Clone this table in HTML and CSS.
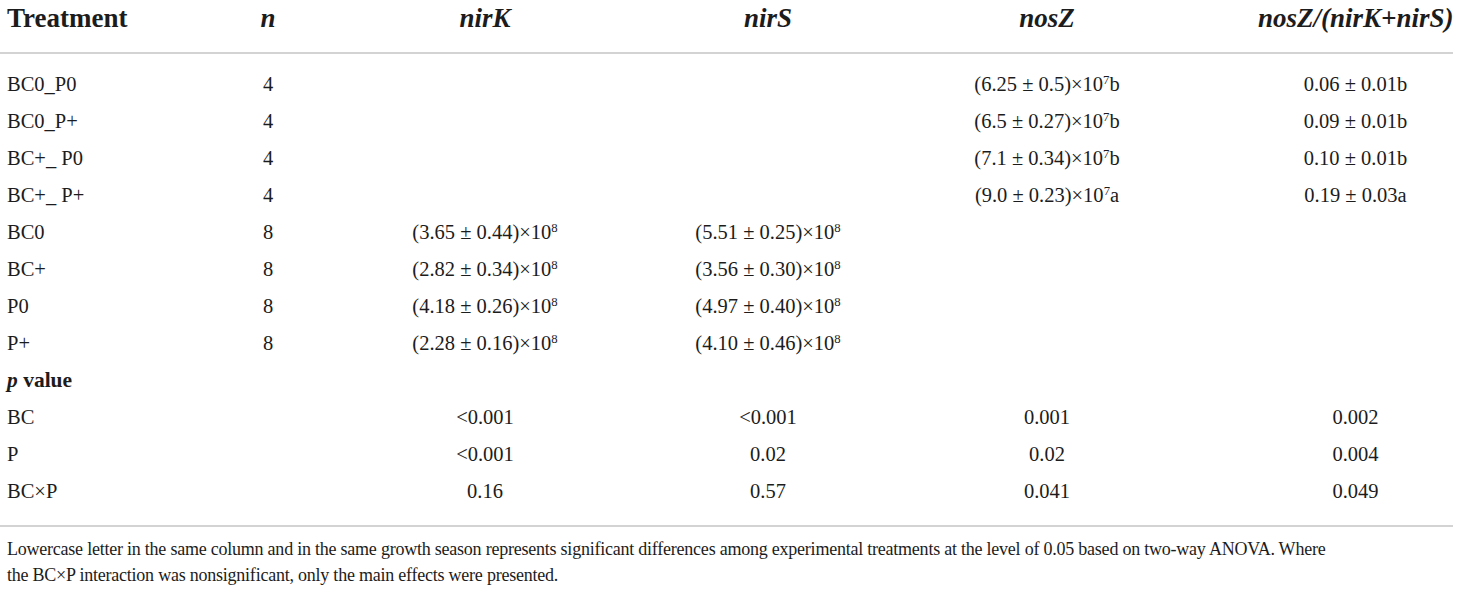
FILE: index.html
```html
<!DOCTYPE html>
<html>
<head>
<meta charset="utf-8">
<link rel="stylesheet" href="styles.css">
</head>
<body>
<div class="wrap">
<table class="tbl">
  <colgroup>
    <col class="c1"><col class="c2"><col class="c3"><col class="c4"><col class="c5"><col class="c6">
  </colgroup>
  <thead>
    <tr>
      <th class="first">Treatment</th>
      <th><i>n</i></th>
      <th><i>nirK</i></th>
      <th><i>nirS</i></th>
      <th><i>nosZ</i></th>
      <th class="last"><i>nosZ/(nirK+nirS)</i></th>
    </tr>
  </thead>
  <tbody>
    <tr class="toprow"><td class="first">BC0_P0</td><td>4</td><td></td><td></td><td>(6.25 ± 0.5)×10<sup>7</sup>b</td><td class="last">0.06 ± 0.01b</td></tr>
    <tr><td class="first">BC0_P+</td><td>4</td><td></td><td></td><td>(6.5 ± 0.27)×10<sup>7</sup>b</td><td class="last">0.09 ± 0.01b</td></tr>
    <tr><td class="first">BC+_ P0</td><td>4</td><td></td><td></td><td>(7.1 ± 0.34)×10<sup>7</sup>b</td><td class="last">0.10 ± 0.01b</td></tr>
    <tr><td class="first">BC+_ P+</td><td>4</td><td></td><td></td><td>(9.0 ± 0.23)×10<sup>7</sup>a</td><td class="last">0.19 ± 0.03a</td></tr>
    <tr><td class="first">BC0</td><td>8</td><td>(3.65 ± 0.44)×10<sup>8</sup></td><td>(5.51 ± 0.25)×10<sup>8</sup></td><td></td><td class="last"></td></tr>
    <tr><td class="first">BC+</td><td>8</td><td>(2.82 ± 0.34)×10<sup>8</sup></td><td>(3.56 ± 0.30)×10<sup>8</sup></td><td></td><td class="last"></td></tr>
    <tr><td class="first">P0</td><td>8</td><td>(4.18 ± 0.26)×10<sup>8</sup></td><td>(4.97 ± 0.40)×10<sup>8</sup></td><td></td><td class="last"></td></tr>
    <tr><td class="first">P+</td><td>8</td><td>(2.28 ± 0.16)×10<sup>8</sup></td><td>(4.10 ± 0.46)×10<sup>8</sup></td><td></td><td class="last"></td></tr>
    <tr><td class="first sub"><b><i>p</i> value</b></td><td></td><td></td><td></td><td></td><td class="last"></td></tr>
    <tr><td class="first">BC</td><td></td><td>&lt;0.001</td><td>&lt;0.001</td><td>0.001</td><td class="last">0.002</td></tr>
    <tr><td class="first">P</td><td></td><td>&lt;0.001</td><td>0.02</td><td>0.02</td><td class="last">0.004</td></tr>
    <tr class="botrow"><td class="first">BC×P</td><td></td><td>0.16</td><td>0.57</td><td>0.041</td><td class="last">0.049</td></tr>
  </tbody>
</table>
<p class="note">Lowercase letter in the same column and in the same growth season represents significant differences among experimental treatments at the level of 0.05 based on two-way ANOVA. Where the BC×P interaction was nonsignificant, only the main effects were presented.</p>
</div>
</body>
</html>
```
FILE: styles.css
```css
html, body {
  margin: 0;
  padding: 0;
  background: #ffffff;
}
body {
  font-family: "Liberation Serif", "Times New Roman", serif;
  color: #1c1c1c;
}
.wrap {
  width: 1453px;
}
.tbl {
  width: 1453px;
  table-layout: fixed;
  border-collapse: collapse;
}
.c1 { width: 200px; }
.c2 { width: 136px; }
.c3 { width: 298px; }
.c4 { width: 268px; }
.c5 { width: 290px; }
.c6 { width: 261px; }

.tbl th {
  font-size: 27px;
  font-weight: bold;
  line-height: 30px;
  padding: 3px 0 19px 0;
  text-align: center;
  white-space: nowrap;
  vertical-align: top;
  border-bottom: 2px solid #d3d3d3;
}
.tbl td {
  font-size: 20.5px;
  height: 37px;
  line-height: 37px;
  padding: 0;
  text-align: center;
  white-space: nowrap;
  vertical-align: middle;
}
.tbl .first {
  text-align: left;
  padding-left: 7px;
}
.tbl .last {
  padding-left: 66px;
}
.tbl .toprow td {
  padding-top: 12px;
}
.tbl .botrow td {
  padding-bottom: 15px;
  border-bottom: 2px solid #d3d3d3;
}
.tbl td.sub {
  font-size: 21.5px;
}
sup {
  font-size: 0.62em;
  line-height: 0;
  vertical-align: 0.55em;
}
.note {
  width: 1340px;
  margin: 9px 0 0 0;
  padding-left: 7px;
  font-size: 18px;
  line-height: 26px;
  letter-spacing: -0.23px;
  color: #1c1c1c;
}
```
